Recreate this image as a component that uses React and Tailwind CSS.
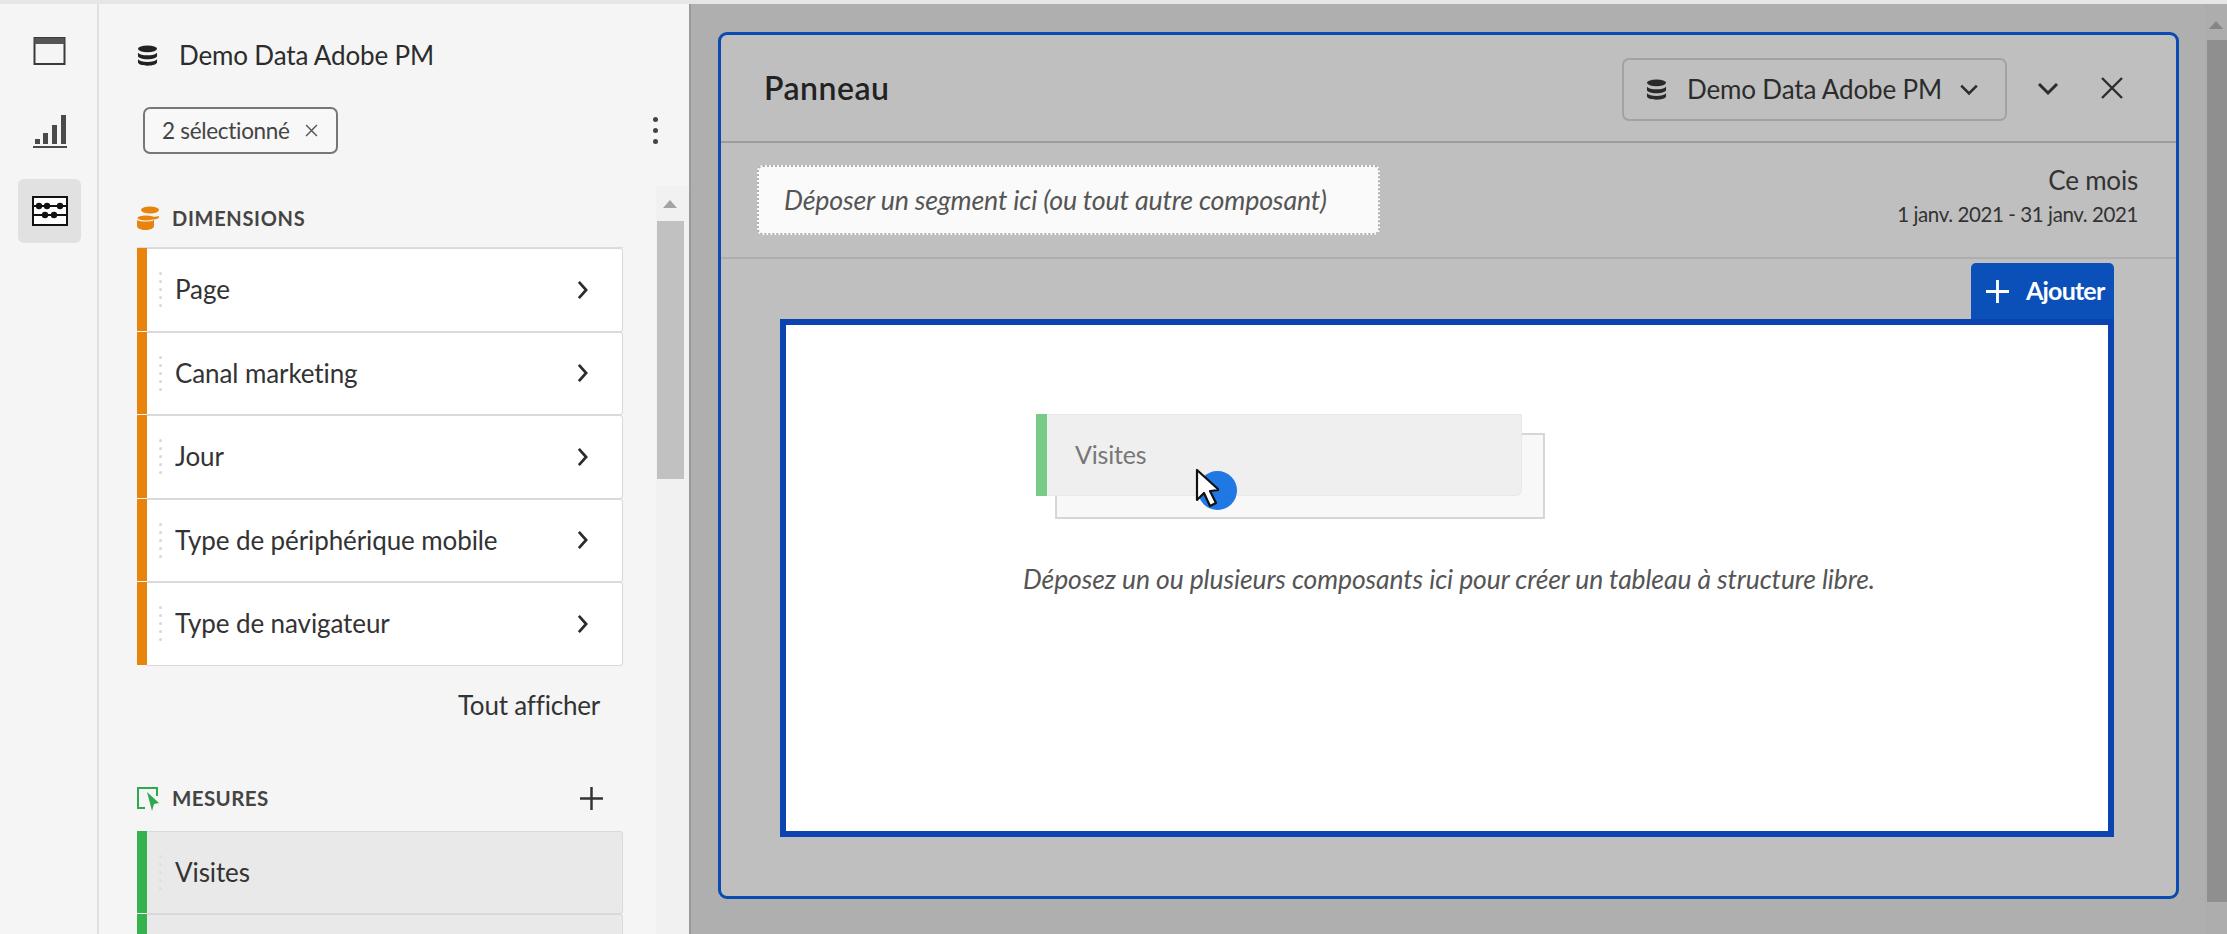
import React from "react";

const FONT = { fontFamily: "Lato, 'Open Sans', sans-serif" };

function DataIcon({ className = "", color = "#222" }) {
  return (
    <svg viewBox="0 0 22 22" className={className} fill={color}>
      <ellipse cx="11" cy="4" rx="10" ry="3.6" />
      <path d="M1 8c2 2 5 2.8 10 2.8S19 10 21 8v3.4c0 2-4.5 3.4-10 3.4S1 13.4 1 11.4z" />
      <path d="M1 15c2 2 5 2.8 10 2.8s8-.8 10-2.8v3.2c0 2-4.5 3.6-10 3.6S1 20.2 1 18.2z" />
    </svg>
  );
}

function Chevron({ dir = "right", className = "", color = "#2c2c2c", width = 3 }) {
  const d = dir === "right" ? "M3 2l8 9-8 9" : "M2 3l9 9 9-9";
  const box = dir === "right" ? "0 0 14 22" : "0 0 22 15";
  return (
    <svg viewBox={box} className={className} fill="none" stroke={color} strokeWidth={width}>
      <path d={d} />
    </svg>
  );
}

function Cross({ className = "", color = "#2c2c2c", width = 2.4 }) {
  return (
    <svg viewBox="0 0 24 24" className={className} fill="none" stroke={color} strokeWidth={width}>
      <path d="M2 2l20 20M22 2L2 22" />
    </svg>
  );
}

function Plus({ className = "", color = "#2c2c2c", width = 3 }) {
  return (
    <svg viewBox="0 0 24 24" className={className} fill="none" stroke={color} strokeWidth={width}>
      <path d="M12 0v24M0 12h24" />
    </svg>
  );
}

function Grip({ color = "bg-[#d8d8d8]" }) {
  return (
    <div className="flex flex-col gap-[5px]">
      {[0, 1, 2, 3, 4].map((i) => (
        <span key={i} className={`h-[3px] w-[3px] rounded-full ${color}`} />
      ))}
    </div>
  );
}

function Row({ label, stripe, bg, chevron = true }) {
  return (
    <div className="flex h-[83.5px] shrink-0">
      <div className={`mb-px w-[10px] shrink-0 ${stripe}`} />
      <div className={`flex flex-1 items-center rounded-r-[3px] border border-l-0 border-[#d9d9d9] pl-[12px] pr-[33px] ${bg}`}>
        <Grip color={chevron ? "bg-[#d8d8d8]" : "bg-[#dedede]"} />
        <span className="ml-[13px] flex-1 text-[26px] tracking-[-0.1px] text-[#333]">{label}</span>
        {chevron && <Chevron className="h-[20px] w-[13px]" />}
      </div>
    </div>
  );
}

const dimensions = ["Page", "Canal marketing", "Jour", "Type de périphérique mobile", "Type de navigateur"];

function Rail() {
  return (
    <div className="flex w-[99px] shrink-0 flex-col items-center border-r-2 border-[#e0e0e0] bg-[#f5f5f5] pl-[2px] pt-[33px]">
      <svg viewBox="0 0 32 28" className="h-[28px] w-[33px]" fill="none">
        <rect x="1" y="1" width="30" height="26" stroke="#3a3a3a" strokeWidth="2" />
        <rect x="1" y="1" width="30" height="6" fill="#555" />
      </svg>
      <svg viewBox="0 0 34 33" className="mt-[50px] h-[33px] w-[34px]" fill="#4a4a4a">
        <rect x="2" y="24" width="5" height="5" />
        <rect x="10" y="18" width="5" height="11" />
        <rect x="19" y="10" width="5" height="19" />
        <rect x="28" y="0" width="5" height="29" />
        <rect x="0" y="31" width="34" height="2" />
      </svg>
      <div className="mt-[31px] flex h-[64px] w-[63px] items-center justify-center rounded-[6px] bg-[#e1e1e1]">
        <svg viewBox="0 0 36 30" className="h-[30px] w-[36px]" fill="none" stroke="#111" strokeWidth="2">
          <rect x="1" y="1" width="34" height="28" fill="#fff" />
          <path d="M1 10h34M1 19h34" />
          <g fill="#111" stroke="none">
            <circle cx="7" cy="10" r="3.2" />
            <circle cx="15" cy="10" r="3.2" />
            <circle cx="28" cy="10" r="3.2" />
            <circle cx="13" cy="19" r="3.2" />
            <circle cx="22" cy="19" r="3.2" />
          </g>
        </svg>
      </div>
    </div>
  );
}

function Sidebar() {
  return (
    <div className="flex w-[590px] shrink-0 flex-col bg-[#f5f5f5]">
      <div className="flex h-[66px] items-center pl-[38px] pt-[37px]">
        <DataIcon className="h-[21px] w-[21px]" />
        <span className="ml-[21px] text-[26px] tracking-[-0.15px] text-[#2c2c2c]">Demo Data Adobe PM</span>
      </div>
      <div className="mt-[37px] flex items-center pl-[44px] pr-[31px]">
        <div className="flex h-[47px] w-[195px] items-center rounded-[7px] border-2 border-[#777] bg-[#f8f8f8] pl-[17px]">
          <span className="text-[22.5px] tracking-[-0.3px] text-[#444]">2 sélectionné</span>
          <Cross className="ml-[15px] h-[13px] w-[13px]" color="#555" width={2.6} />
        </div>
        <div className="ml-auto flex flex-col gap-[6px]">
          <span className="h-[5px] w-[5px] rounded-full bg-[#444]" />
          <span className="h-[5px] w-[5px] rounded-full bg-[#444]" />
          <span className="h-[5px] w-[5px] rounded-full bg-[#444]" />
        </div>
      </div>
      <div className="mt-[32px] flex min-h-0 flex-1">
        <div className="w-[557px] shrink-0 overflow-hidden pl-[38px] pr-[33px]">
          <div className="flex h-[61px] items-center pt-[2px]">
            <svg viewBox="0 0 22 24" className="h-[24px] w-[22px]" fill="#e8830c">
              <ellipse cx="13" cy="4" rx="9" ry="3.4" />
              <path d="M5 10c3 1.4 12 1.4 17 0v1.5c-1 1-2 1.600-6 2.100-1-1.600-5-2.600-11-2.400z" />
              <ellipse cx="9" cy="12" rx="8.500" ry="2.600" />
              <path d="M0 14c3 2 14 2 17 0v6c0 2.400-4 4-8.500 4S0 22.400 0 20z" />
            </svg>
            <span className="ml-[13px] text-[20px] font-bold tracking-[0.7px] text-[#444]">DIMENSIONS</span>
          </div>
          <div className="border-t border-[#ddd]">
            {dimensions.map((d) => (
              <Row key={d} label={d} stripe="bg-[#e8830c]" bg="bg-white" />
            ))}
          </div>
          <div className="mt-[20px] pr-[23px] text-right text-[26px] tracking-[-0.2px] text-[#333]">Tout afficher</div>
          <div className="mt-[59px] flex h-[30px] items-center">
            <svg viewBox="0 0 22 24" className="h-[24px] w-[22px]" fill="none">
              <path d="M8 21H1V1h19v8" stroke="#2fa84f" strokeWidth="2" />
              <path d="M10 5l12 11-5 1-2 7z" fill="#2fa84f" />
            </svg>
            <span className="ml-[13px] text-[20.5px] font-bold tracking-[0.4px] text-[#444]">MESURES</span>
            <Plus className="ml-auto mr-[20px] h-[23px] w-[23px]" color="#333" width={2.6} />
          </div>
          <div className="mt-[17px]">
            <Row label="Visites" stripe="bg-[#36b24f]" bg="bg-[#e9e9e9]" chevron={false} />
            <Row label="" stripe="bg-[#36b24f]" bg="bg-[#e9e9e9]" chevron={false} />
          </div>
        </div>
        <div className="flex w-[33px] shrink-0 flex-col bg-[#f1f1f1]">
          <div className="ml-[7px] mt-[14px] h-0 w-0 border-x-[7px] border-b-[8px] border-x-transparent border-b-[#a3a3a3]" />
          <div className="ml-[1px] mt-[13px] h-[258px] w-[27px] bg-[#c1c1c1]" />
        </div>
      </div>
    </div>
  );
}

function Canvas() {
  return (
    <div className="relative ml-[59px] mr-[62px] mt-[4px]">
      <div className="ml-auto flex h-[56px] w-[143px] items-center rounded-t-[5px] bg-[#0b50b8] pl-[15px]">
        <Plus className="h-[23px] w-[23px]" color="#fff" width={3} />
        <span className="ml-[17px] text-[25px] font-bold tracking-[-0.8px] text-white">Ajouter</span>
      </div>
      <div className="flex h-[518px] flex-col border-[6px] border-[#0b43b0] bg-white">
        <div className="relative ml-[250px] mt-[89px] h-[105px] w-[509px]">
          <div className="ml-[19px] mt-[19px] h-[86px] w-[490px] border-2 border-[#d6d6d6] bg-[#f8f8f8]" />
          <div className="absolute left-0 top-0 flex h-[82px] w-[486px]">
            <div className="w-[11px] bg-[#79c987]" />
            <div className="flex flex-1 items-center rounded-br-[6px] border border-l-0 border-[#e9e9e9] bg-[#efefef] pl-[28px]">
              <span className="text-[25px] tracking-[-0.2px] text-[#777]">Visites</span>
            </div>
          </div>
          <div className="absolute left-[162px] top-[57px] flex h-[39px] w-[39px] items-center justify-center rounded-full bg-[#1f78e4]" />
          <svg viewBox="0 0 24 40" className="absolute left-[159px] top-[54px] h-[40px] w-[24px]">
            <path d="M2 2v30l7-7 6 13 6-3-6-12 9-1z" fill="#fff" stroke="#111" strokeWidth="2.200" strokeLinejoin="round" />
          </svg>
        </div>
        <p className="mt-[41px] pl-[237px] text-[26.5px] italic tracking-[-0.1px] text-[#555]">
          Déposez un ou plusieurs composants ici pour créer un tableau à structure libre.
        </p>
      </div>
    </div>
  );
}

function Panel() {
  return (
    <div className="ml-[27px] mt-[28px] flex h-[867px] w-[1461px] shrink-0 flex-col rounded-[9px] border-[3px] border-[#0b4ab0] bg-[#bfbfbf]">
      <div className="flex h-[108px] shrink-0 items-center border-b-2 border-[#9c9c9c] pl-[43px] pr-[52px]">
        <span className="text-[32px] font-semibold tracking-[0.5px] text-[#222]">Panneau</span>
        <div className="ml-auto mt-[2px] flex h-[63px] w-[385px] items-center rounded-[7px] border-2 border-[#a2a2a2] pl-[22px]">
          <DataIcon className="h-[21px] w-[21px]" color="#2a2a2a" />
          <span className="ml-[20px] text-[26px] tracking-[-0.15px] text-[#2c2c2c]">Demo Data Adobe PM</span>
          <Chevron dir="down" className="ml-[17px] h-[13px] w-[20px]" />
        </div>
        <Chevron dir="down" className="ml-[29px] h-[15px] w-[24px]" />
        <Cross className="ml-[40px] h-[24px] w-[24px]" />
      </div>
      <div className="flex h-[116px] shrink-0 items-center border-b-2 border-[#aeaeae] pl-[36px] pr-[38px]">
        <div className="flex h-[70px] w-[623px] items-center rounded-[6px] border-2 border-dotted border-[#b0b0b0] bg-[#fafafa] pl-[25px]">
          <span className="text-[26.800px] italic tracking-[-0.2px] text-[#555]">Déposer un segment ici (ou tout autre composant)</span>
        </div>
        <div className="ml-auto flex flex-col items-end pb-[8px]">
          <span className="text-[26px] tracking-[-0.2px] leading-[36px] text-[#333]">Ce mois</span>
          <span className="text-[20.500px] tracking-[-0.4px] leading-[32px] text-[#333]">1 janv. 2021 - 31 janv. 2021</span>
        </div>
      </div>
      <Canvas />
    </div>
  );
}

export default function App() {
  return (
    <div className="flex h-[934px] w-[2227px] flex-col overflow-hidden bg-[#afafaf]" style={FONT}>
      <div className="h-[4px] shrink-0 bg-[#e6e6e6]" />
      <div className="flex min-h-0 flex-1">
        <Rail />
        <Sidebar />
        <div className="flex min-w-0 flex-1 border-l-2 border-[#9a9a9a]">
          <Panel />
          <div className="ml-[26px] flex flex-1 flex-col items-center bg-[#adadad]">
            <div className="mt-[17px] h-0 w-0 border-x-[7px] border-b-[8px] border-x-transparent border-b-[#858585]" />
            <div className="ml-[4px] mt-[11px] h-[862px] w-full bg-[#8f8f8f]" />
          </div>
        </div>
      </div>
    </div>
  );
}
